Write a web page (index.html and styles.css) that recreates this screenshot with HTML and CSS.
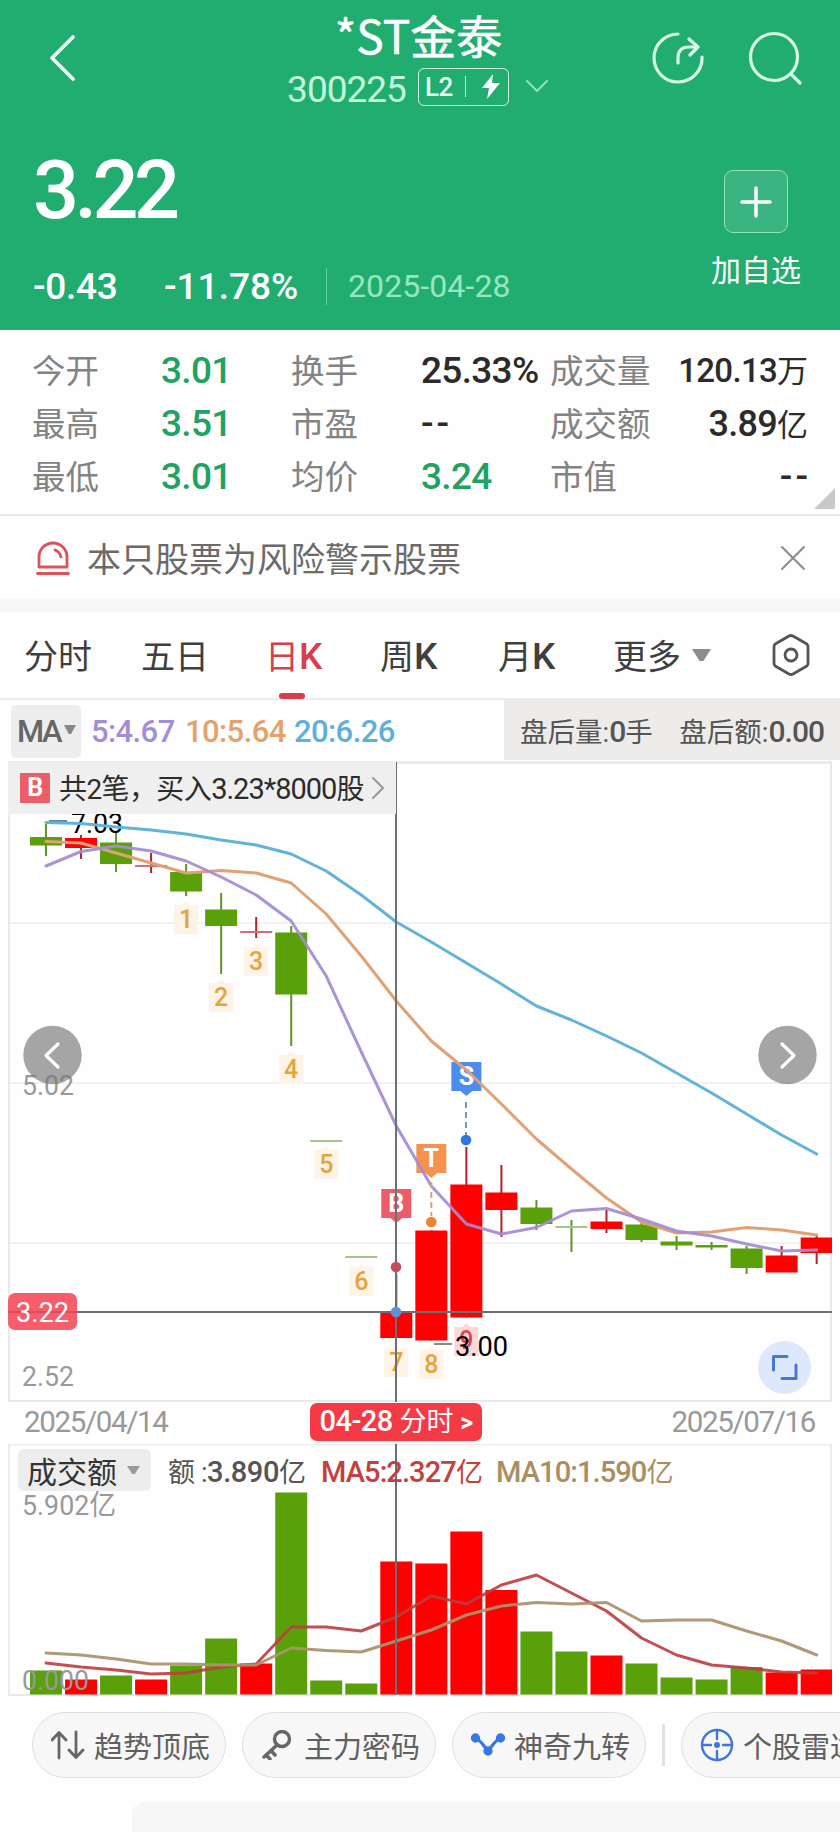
FILE: index.html
```
<!DOCTYPE html>
<html lang="zh-CN">
<head>
<meta charset="utf-8">
<title>*ST金泰 300225</title>
<link rel="stylesheet" href="styles.css">
</head>
<body>
<header class="hero">
  <div class="topbar">
    <svg class="back" width="30" height="48" viewBox="0 0 30 48"><path d="M26 4L5 25L26 46"/></svg>
    <div class="heading">
      <h1>*ST金泰</h1>
      <div class="code-row">
        <span class="code">300225</span>
        <span class="level"><b>L2</b><i></i><svg width="20" height="27" viewBox="0 0 20 27"><path d="M12 1L1 15H8L6 26L19 10H11Z"/></svg></span>
        <svg class="chev" width="22" height="13" viewBox="0 0 22 13"><path d="M1 1L11 11L21 1"/></svg>
      </div>
    </div>
    <div class="tools">
      <svg width="52" height="54" viewBox="0 0 52 54"><path d="M26 3A24 24 0 1 0 50 26M26 32V27Q26 16 37 16H45M37 8L46 16L38 24"/></svg>
      <svg class="search" width="54" height="54" viewBox="0 0 54 54"><circle cx="26" cy="26" r="23.5"/><path d="M43 43L52 52"/></svg>
    </div>
  </div>
  <div class="quote">
    <div>
      <div class="price">3.22</div>
      <div class="change"><span class="diff">-0.43</span><span class="pct">-11.78%</span><time>2025-04-28</time></div>
    </div>
    <div class="watch">
      <span class="plus"><svg width="32" height="32" viewBox="0 0 32 32"><path d="M16 2V30M2 16H30"/></svg></span>
      <span>加自选</span>
    </div>
  </div>
</header>

<section class="stats">
  <label>今开</label><b class="down">3.01</b><label>换手</label><b>25.33%</b><label>成交量</label><b class="end">120.13<em>万</em></b>
  <label>最高</label><b class="down">3.51</b><label>市盈</label><b class="none">--</b><label>成交额</label><b class="end wide">3.89<em>亿</em></b>
  <label>最低</label><b class="down">3.01</b><label>均价</label><b class="down">3.24</b><label>市值</label><b class="end none">--</b>
  <span class="corner"></span>
</section>

<section class="warning">
  <svg width="34" height="36" viewBox="0 0 34 36"><path d="M3 27V17A14 14 0 0 1 31 17V27ZM1.5 33.5H32.5M19 10Q24 12 25 17"/></svg>
  <span>本只股票为风险警示股票</span>
  <svg class="close" width="26" height="26" viewBox="0 0 26 26"><path d="M2 2L24 24M24 2L2 24"/></svg>
</section>

<nav class="tabs">
  <span>分时</span><span>五日</span><span class="active">日<b>K</b></span><span>周<b>K</b></span><span>月<b>K</b></span><span class="more">更多<i></i></span>
  <svg width="40" height="44" viewBox="0 0 40 44"><path d="M18 3Q20 2 22 3L35 10.500Q37 11.500 37 14V30Q37 32.500 35 33.500L22 41Q20 42 18 41L5 33.500Q3 32.500 3 30V14Q3 11.500 5 10.500Z"/><circle cx="20" cy="22" r="6"/></svg>
</nav>

<div class="ma-row">
  <span class="ma-btn">MA<i></i></span>
  <span class="m5">5:4.67</span><span class="m10">10:5.64</span><span class="m20">20:6.26</span>
  <div class="after"><span>盘后量:<b>0</b>手</span><span>盘后额:<b>0.00</b></span></div>
</div>

<section class="kchart">
  <svg id="k" width="840" height="642" viewBox="0 760 840 642"></svg>
  <div class="trade"><b>B</b><span>共2笔，买入<em>3.23*8000</em>股</span><svg width="14" height="22" viewBox="0 0 14 22"><path d="M2 1L12 11L2 21"/></svg></div>
</section>

<div class="dates"><span>2025/04/14</span><b>04-28 <em>分时</em> <i>&gt;</i></b><span>2025/07/16</span></div>

<section class="volume">
  <svg id="v" width="840" height="252" viewBox="0 1444 840 252"></svg>
  <div class="legend"><span class="vol-btn">成交额<i></i></span><span class="v0">额 :<b>3.890</b>亿</span><span class="v5">MA5:2.327<em>亿</em></span><span class="v10">MA10:1.590<em>亿</em></span></div>
</section>

<div class="pills">
  <span class="pill"><svg width="34" height="30" viewBox="0 0 34 30"><path d="M8 28V3M1 10L8 2.500L15 10M25 2V27M18 20L25 27.500L32 20"/></svg>趋势顶底</span>
  <span class="pill key"><svg width="34" height="30" viewBox="0 0 34 30"><circle cx="21" cy="9" r="7.500"/><path d="M16 15L3 27M5 25L9 29M10 20.500L14 25"/></svg>主力密码</span>
  <span class="pill blue"><svg width="34" height="30" viewBox="0 0 34 30"><path d="M4 8C9 9 12 15 17 21C22 15 25 9 30 8"/><circle cx="4.500" cy="8" r="3"/><circle cx="29.500" cy="8" r="3"/><circle cx="17" cy="21" r="3"/></svg>神奇九转</span>
  <i class="split"></i>
  <span class="pill radar"><svg width="34" height="34" viewBox="0 0 34 34"><circle cx="17" cy="17" r="15"/><path d="M17 2V11M17 23V32M2 17H11M23 17H32"/><circle class="dot" cx="17" cy="17" r="3"/></svg>个股雷达</span>
</div>
<div class="sheet"></div>
<script src="chart.js"></script>
</body>
</html>
```

FILE: styles.css
```
* { box-sizing: border-box; }
body { margin: 0; width: 840px; height: 1832px; overflow: hidden; background: #fefefe; color: #333; font-family: Roboto, "Noto Sans CJK SC", sans-serif; }
svg { display: block; flex: none; fill: none; stroke-linecap: round; stroke-linejoin: round; }
b { font-weight: 500; }
em, i { font-style: normal; }

.hero { height: 330px; background: #22ad70; color: #fff; padding: 0 38px 0 33px; border-bottom: 1px solid #3ca37a; }
.topbar { height: 122px; display: grid; grid-template-columns: 200px 1fr 200px; }
.back { margin: 33px 0 0 14px; stroke: #f2fff8; stroke-width: 3.6; }
.heading { display: flex; flex-direction: column; align-items: center; }
h1 { margin: 7px 0 0 2px; font: 400 46px/54px "Noto Sans CJK SC", sans-serif; -webkit-text-stroke: .5px #fff; }
.code-row { display: flex; align-items: center; height: 50px; margin-top: 2px; }
.code { font-size: 37px; letter-spacing: -1px; color: #c2f7da; margin-top: 2px; }
.level { display: flex; align-items: center; gap: 12px; width: 91px; height: 38px; margin: -3px 0 0 12px; padding-left: 6px; border: 1.500px solid #d4fae5; border-radius: 6px; }
.level b { font-size: 26px; letter-spacing: -.5px; color: #e4fff0; }
.level i { width: 1px; height: 21px; background: #c2f7da; }
.level svg { fill: #fff; margin-left: 3px; }
.chev { margin: -4px 0 0 17px; stroke: #8fe3b8; stroke-width: 2; }
.tools { display: flex; justify-content: flex-end; gap: 44px; padding-top: 31px; stroke: #d6fae6; stroke-width: 3.2; }
.quote { display: flex; justify-content: space-between; }
.price { font-size: 81px; line-height: 96px; height: 136px; padding-top: 21px; font-weight: 500; letter-spacing: -4.5px; }
.change { display: flex; align-items: center; height: 56px; font-size: 37px; font-weight: 500; letter-spacing: -.3px; }
.diff { width: 131px; }
.pct { width: 162px; letter-spacing: 0; }
.change time { font-size: 32px; font-weight: 400; color: #98e5bf; border-left: 1px solid #6cd0a0; padding-left: 21px; letter-spacing: .1px; line-height: 37px; }
.watch { display: flex; flex-direction: column; align-items: center; width: 90px; padding-top: 48px; margin-right: 1px; font: 30px/44px "Noto Sans CJK SC"; }
.plus { width: 64px; height: 63px; margin-bottom: 13px; display: grid; place-items: center; border: 1.500px solid #97e0bb; border-radius: 9px; background: #3ab57f; }
.plus svg { stroke: #fff; stroke-width: 3.5; }

.stats { position: relative; height: 186px; padding: 14px 32px 0 32px; display: grid; grid-template-columns: 129px 130px 130px 129px 1fr 120px; grid-auto-rows: 53px; align-items: center; white-space: nowrap; border-bottom: 2px solid #e9e9e9; }
.stats label { font: 33.5px/50px "Noto Sans CJK SC"; color: #838383; margin-top: -4px; }
.stats b { font-size: 37px; letter-spacing: -.7px; color: #2b2b2b; line-height: 50px; }
.stats .down { color: #21a162; }
.stats .end { justify-self: end; font-size: 33px; }
.stats .wide { font-size: 36px; }
.stats .none { font-size: 37px; letter-spacing: 3px; margin-right: -3px; }
.stats .end em { font: 31px/40px "Noto Sans CJK SC"; letter-spacing: 0; }
.corner { position: absolute; right: 5px; bottom: 5px; width: 21px; height: 21px; background: #c9c9c9; clip-path: polygon(100% 0, 100% 100%, 0 100%); }

.warning { height: 96px; padding: 0 34px 0 36px; display: flex; align-items: center; font: 34px "Noto Sans CJK SC"; color: #6a6a6a; border-bottom: 13px solid #f7f7f7; }
.warning svg { stroke: #d9535b; stroke-width: 2.8; margin-right: 17px; }
.warning span { margin-top: -1px; }
.warning svg.close { margin: 0 0 0 auto; stroke: #8b8b8b; stroke-width: 2; }

.tabs { height: 88px; padding: 0 29px 0 24px; display: flex; align-items: center; font: 34px/86px "Noto Sans CJK SC"; color: #3f3f3f; border-bottom: 2px solid #ececec; }
.tabs > span { width: 119px; white-space: nowrap; }
.tabs > span:nth-child(1) { width: 117px; }
.tabs > span:nth-child(2) { width: 124px; }
.tabs > span:nth-child(3) { width: 115px; }
.tabs > span:nth-child(4) { width: 118px; }
.tabs > span:nth-child(5) { width: 115px; }
.tabs b { font: 500 37px Roboto; letter-spacing: -1px; }
.tabs .active { color: #d6404a; }
.tabs .active::after { content: ""; display: block; width: 26px; height: 6px; margin: -5px 0 -1px 14px; border-radius: 3px; background: #d6404a; }
.tabs .more { display: flex; align-items: center; gap: 11px; width: auto; }
.more i { width: 19px; height: 12px; background: #8d8d8d; clip-path: polygon(0 0, 100% 0, 60% 100%, 40% 100%); }
.tabs svg { margin-left: auto; stroke: #555; stroke-width: 2.8; }

.ma-row { height: 60px; display: flex; align-items: center; font-size: 31px; font-weight: 500; letter-spacing: -.6px; padding: 2px 0 0 11px; white-space: nowrap; }
.ma-btn { display: flex; align-items: center; width: 70px; height: 53px; padding-left: 6px; margin-right: 10px; background: #ededed; border-radius: 5px; color: #666; letter-spacing: -2.5px; }
.ma-btn i { width: 12px; height: 9px; margin: -3px 0 0 4px; background: #888; clip-path: polygon(0 0, 100% 0, 60% 100%, 40% 100%); }
.m5 { width: 94px; color: #a58cd6; }
.m10 { width: 109px; color: #e6a168; }
.m20 { color: #5db1d9; }
.after { margin: -2px 0 0 auto; width: 336px; height: 60px; padding: 0 16px; background: #eeecea; display: flex; align-items: center; justify-content: space-between; font: 27.5px Roboto, "Noto Sans CJK SC"; color: #555; letter-spacing: 0; }
.after b { font-size: 30px; letter-spacing: -1px; }

.kchart { position: relative; height: 642px; }
.trade { position: absolute; left: 8px; top: 2px; width: 388px; height: 52px; display: flex; align-items: center; background: #efefef; padding-left: 12px; font-size: 28px; color: #2c2c2c; white-space: nowrap; letter-spacing: -.6px; }
.trade b { width: 30px; height: 30px; background: #ed5d67; color: #fff; font: 700 25px/30px Roboto; text-align: center; margin-right: 9px; border-radius: 1px; }
.trade span { width: 304px; margin-top: -2px; }
.trade em { font-size: 29px; letter-spacing: -1px; }
.trade svg { stroke: #999; stroke-width: 2; margin-left: 8px; }

.dates { height: 42px; display: grid; grid-template-columns: 286px 1fr auto; align-items: center; padding: 0 25px 2px 24px; font-size: 29.5px; letter-spacing: -1.35px; color: #999; }
.dates b { width: 172px; height: 38px; background: #f43b45; border-radius: 7px; color: #fff; font-size: 29px; line-height: 37px; text-align: center; letter-spacing: -.5px; white-space: nowrap; }
.dates em { font: 27px/30px "Noto Sans CJK SC"; letter-spacing: 0; }
.dates i { font-size: 25px; font-weight: 700; }
.volume { position: relative; height: 252px; }
.legend { position: absolute; left: 18px; top: 5px; display: flex; align-items: center; height: 42px; font-size: 29px; font-weight: 500; letter-spacing: -.9px; white-space: nowrap; }
.legend em { font-weight: 400; font-size: 27px; }
.vol-btn { display: flex; align-items: center; width: 133px; height: 42px; padding-left: 9px; background: #ededed; border-radius: 6px; font: 30px/40px "Noto Sans CJK SC"; letter-spacing: 0; color: #333; }
.vol-btn i { width: 13px; height: 8px; margin-left: 10px; background: #999; clip-path: polygon(0 0, 100% 0, 60% 100%, 40% 100%); }
.v0 { width: 153px; margin-left: 17px; color: #555; font-size: 27px; font-weight: 400; letter-spacing: -.4px; }
.v0 b { font-size: 29px; }
.v5 { width: 175px; color: #c2413f; }
.v10 { color: #a98e62; }

.pills { width: 840px; overflow: hidden; display: flex; align-items: center; padding: 15px 0 0 32px; height: 82px; }
.pill { flex: none; width: 194px; height: 66px; display: flex; align-items: center; gap: 9px; padding-left: 18px; margin-right: 16px; font: 29px/60px "Noto Sans CJK SC"; color: #606060; background: #f7f7f7; border: 1px solid #dfdfdf; border-radius: 33px; }
.pill svg { stroke: #666; stroke-width: 2.8; }
.key svg { stroke-width: 3.4; }
.pill.blue svg { stroke: #3577e6; stroke-width: 3.3; }
.blue circle { fill: #3577e6; }
.pill.radar svg { stroke: #3f78d8; stroke-width: 2.4; }
.radar .dot { fill: #3f78d8; stroke: none; }
.split { width: 3px; height: 42px; background: #e2e2e2; margin-right: 16px; flex: none; }
.sheet { margin: 24px 0 0 132px; height: 30px; background: #f7f7f7; border-top-left-radius: 12px; }

.num { font-family: Roboto, "Noto Sans CJK SC", sans-serif; }
```

FILE: chart.js
```
const X0 = 46, STEP = 35.03, W = 32;
const GREEN = '#5aa00a', RED = '#ff0000', INK = '#687078';
const cx = i => X0 + i * STEP;
const rect = (x, y, w, h, f, extra = '') => `<rect x="${x}" y="${y}" width="${w}" height="${h}" fill="${f}" ${extra}/>`;
const line = (x1, y1, x2, y2, s, w = 2, extra = '') => `<path d="M${x1} ${y1}L${x2} ${y2}" stroke="${s}" stroke-width="${w}" stroke-linecap="butt" ${extra}/>`;
const text = (x, y, t, size, fill, len, weight = 400) => `<text class="num" x="${x}" y="${y}" font-size="${size}" fill="${fill}" font-weight="${weight}" textLength="${len}" lengthAdjust="spacingAndGlyphs">${t}</text>`;
const curve = (ys, s, extra = '') => `<polyline points="${ys.map((y, i) => cx(i).toFixed(1) + ',' + y).join(' ')}" stroke="${s}" stroke-width="3" ${extra}/>`;

// body top, body bottom, high, low, colour
const candles = [
  [837,845.5,824,856,'g'],[838,848,835,859,'r'],[842.5,864,833,872,'g'],[865,867,853,873,'r'],
  [872,891.5,864,896,'g'],[909.5,926,893,974,'g'],[931,933,917,938,'r'],[932.5,994.5,926,1046,'g'],
  [1140,1142,1140,1142,'g'],[1256,1258,1256,1258,'g'],[1312,1338,1274,1338,'r'],[1230.5,1340.5,1230.5,1340.5,'r'],
  [1184.5,1317.5,1147,1317.5,'r'],[1192.5,1210,1165,1237,'r'],[1207.5,1224,1200,1230,'g'],[1226,1228,1220,1252,'g'],
  [1221.5,1229,1210,1233,'r'],[1224.5,1240,1222,1242,'g'],[1241.5,1245.5,1236,1250,'g'],[1245,1247.5,1242,1250,'g'],
  [1248.5,1268,1246,1274,'g'],[1255.5,1272.5,1246,1272,'r'],[1237.5,1253,1235,1264,'r']
];
const ma5 = [866,851.5,846,851,861,877,895,921,976,1052,1126,1186,1224,1234,1227.5,1211,1208.5,1219,1231,1236,1244,1251,1250];
const ma10 = [841.5,843,853,863,873,870.5,873,883,914,956,1001,1041,1070,1104,1139,1169,1198,1222,1233,1232,1227.5,1230,1235];
const ma20 = [822.5,823.5,827,830,834,840,845,854,871,895,922,942,963,984,1006,1020,1036,1053,1073,1093,1114,1135,1154];

let k = '';
[923,1083,1243].forEach(y => k += line(9, y, 831, y, '#f1f1f1'));
k += line(8, 762.5, 832, 762.5, '#ebebeb', 3) + line(9, 762, 9, 1402, '#e9e9e9') + line(831, 762, 831, 1402, '#e9e9e9') + line(8, 1401, 832, 1401, '#e9e9e9');
candles.forEach(([t, b, h, l, c], i) => {
  const col = c === 'g' ? GREEN : RED, thin = b - t <= 2;
  k += line(cx(i), h, cx(i), l, c === 'g' ? '#5c9627' : '#b5202a');
  k += rect(cx(i) - 16, t, Math.min(W, 832 - cx(i) + 16), b - t, thin ? (c === 'g' ? '#a5c48a' : '#cf6f76') : col);
});
k += line(49, 821, 67, 821, '#5f83a3');
k += text(71, 833, '7.03', 28, '#000', 52);

// consecutive-day counters; the ninth is highlighted
const steps = [[4,905,1],[5,983,2],[6,947,3],[7,1055,4],[8,1150,5],[9,1267,6],[10,1348,7],[11,1350,8],[12,1327,9]];
steps.forEach(([i, y, n]) => {
  const x = cx(i), last = n === 9;
  k += `<path d="M${x - 12} ${y}H${x - 4}L${x} ${y - 4}L${x + 4} ${y}H${x + 12}V${y + 29}H${x - 12}Z" fill="${last ? '#fbd9d9' : '#fdf3e6'}"/>`;
  k += `<text class="num" x="${x}" y="${y + (last ? 22 : 23)}" font-size="25" font-weight="500" text-anchor="middle" fill="${last ? '#d94a52' : '#e5a43b'}">${n}</text>`;
});

k += text(22, 1095, '5.02', 28.5, '#999', 52) + text(22, 1386, '2.52', 28.5, '#999', 52);
[[10,1189,'B','#ec5d69'],[11,1144,'T','#f5924e'],[12,1062,'S','#4c8cf0']].forEach(([i, y, n, f]) => {
  const x = cx(i);
  k += `<path d="M${x - 15} ${y}H${x + 15}V${y + 29}H${x + 6}L${x} ${y + 34}L${x - 6} ${y + 29}H${x - 15}Z" fill="${f}"/>`;
  k += `<text class="num" x="${x}" y="${y + 23}" font-size="25" font-weight="700" text-anchor="middle" fill="#fff">${n}</text>`;
});
k += curve(ma20, '#62b3d9') + curve(ma10, '#e0a274') + curve(ma5, '#a58cd3', 'stroke-opacity=".93"');
k += line(431.3, 1182, 431.3, 1216, '#dba078', 2, 'stroke-dasharray="6 4"') + line(466, 1102, 466, 1135, '#6f9dc2', 2, 'stroke-dasharray="6 4"');
k += line(396, 762, 396, 1402, INK) + line(8, 1312, 832, 1312, INK);
[[396,1267,'#c54c59'],[431.3,1222,'#f08331'],[466,1140,'#2c76e6'],[396,1312,'#5a93d9']].forEach(([x, y, f]) => k += `<circle cx="${x}" cy="${y}" r="5.3" fill="${f}"/>`);
k += line(434, 1344, 452, 1344, '#888') + text(455, 1356, '3.00', 28.5, '#000', 53);
k += rect(8, 1293, 69, 37, '#f55e6a', 'rx="7"') + line(8, 1312, 77, 1312, '#d94d5b') + text(16, 1322, '3.22', 28.5, '#fff', 53);
k += `<circle cx="52.5" cy="1055" r="29.2" fill="#777" fill-opacity=".66"/><path d="M58 1044L46 1055.5L58 1067" stroke="#fff" stroke-width="3.2"/>`;
k += `<circle cx="787.5" cy="1055" r="29.2" fill="#777" fill-opacity=".66"/><path d="M782 1044L794 1055.5L782 1067" stroke="#fff" stroke-width="3.2"/>`;
k += `<circle cx="784.5" cy="1367.5" r="26.5" fill="#dee8fc"/><path d="M787 1356.5H773.5V1370M782 1378.5H796V1365" stroke="#4379d4" stroke-width="3"/>`;
document.getElementById('k').innerHTML = k;

const tops = [1670.5,1679.5,1675.5,1679.5,1665.5,1638.5,1663.5,1492.5,1680.5,1683.5,1561.5,1563.5,1531.5,1590,1631.5,1651.5,1655.5,1663.5,1677.5,1679.5,1667,1672.5,1669.5];
const shades = 'grgrggrgggrrrrggrggggrr';
const v5 = [1663,1667,1670,1674,1673,1667,1664,1627,1627,1631,1617,1596,1604,1585,1575,1593,1611,1638,1655,1665,1668,1672,1673];
const v10 = [1653,1655,1659,1664,1664,1665,1665,1648,1650.5,1652,1641,1630,1615,1606,1602.5,1604,1602.5,1621,1620,1620,1631,1641,1655];
let v = line(8, 1444.5, 832, 1444.5, '#eeeeee') + line(9, 1402, 9, 1696, '#ebebeb') + line(831, 1402, 831, 1696, '#ebebeb') + line(8, 1695, 832, 1695, '#e9e9e9');
tops.forEach((t, i) => v += rect(cx(i) - 16, t, Math.min(W, 832 - cx(i) + 16), 1694.5 - t, shades[i] === 'g' ? GREEN : RED));
v += curve(v5, '#bb3d3f', 'stroke-opacity=".9"') + curve(v10, '#ab936c', 'stroke-opacity=".94"');
v += text(22, 1515, '5.902亿', 28, '#999', 94) + text(22, 1690, '0.000', 28, '#999', 67);
v += line(396, 1444, 396, 1695, INK);
document.getElementById('v').innerHTML = v;
```
